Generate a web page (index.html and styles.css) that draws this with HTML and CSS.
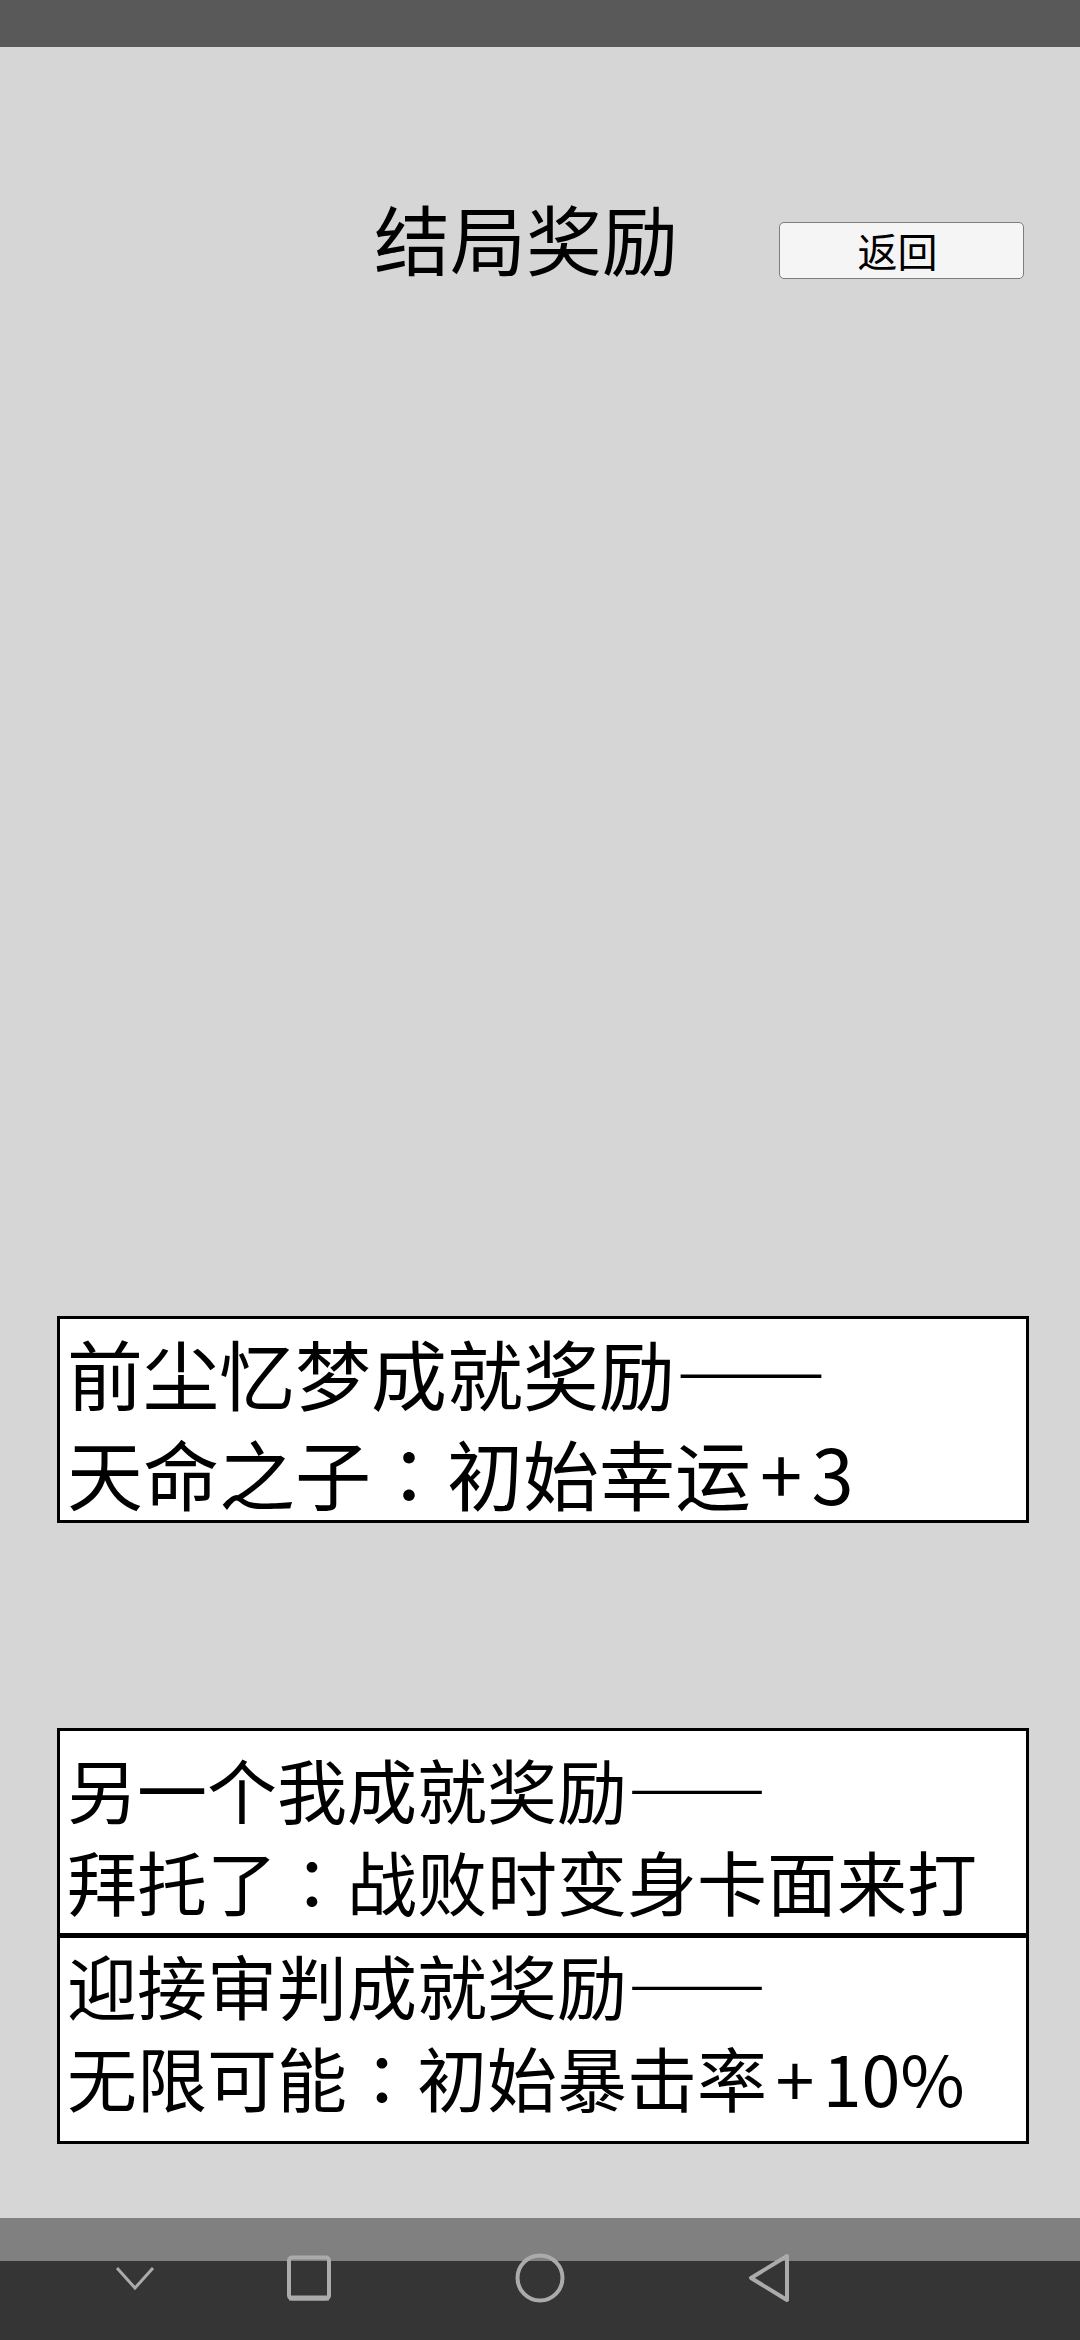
FILE: index.html
```html
<!DOCTYPE html>
<html lang="zh-CN">
<head>
<meta charset="utf-8">
<title>结局奖励</title>
<link rel="stylesheet" href="styles.css">
</head>
<body>
<div class="page">
  <div class="status-bar"></div>
  <header class="header">
    <h1 class="title">结局奖励</h1>
    <button class="back-btn">返回</button>
  </header>

  <section class="reward reward-first">
    <div class="line">前尘忆梦成就奖励<span class="dash">——</span></div>
    <div class="line">天命之子<span class="colon" lang="zh-TW">：</span>初始幸运<span class="plus">+</span>3</div>
  </section>

  <div class="reward-group">
    <section class="reward reward-second">
      <div class="line">另一个我成就奖励<span class="dash">——</span></div>
      <div class="line">拜托了<span class="colon" lang="zh-TW">：</span>战败时变身卡面来打</div>
    </section>
    <section class="reward reward-third">
      <div class="line">迎接审判成就奖励<span class="dash">——</span></div>
      <div class="line">无限可能<span class="colon" lang="zh-TW">：</span>初始暴击率<span class="plus">+</span>10%</div>
    </section>
  </div>

  <footer class="nav">
    <svg class="nav-icon icon-hide" viewBox="0 0 60 60" width="60" height="60">
      <polyline points="12,20 30,40 48,20" fill="none" stroke="#ababab" stroke-width="3" stroke-linejoin="miter"/>
    </svg>
    <svg class="nav-icon icon-recent" viewBox="0 0 60 60" width="60" height="60">
      <rect x="10" y="9.5" width="40" height="41" rx="3" fill="none" stroke="#ababab" stroke-width="4"/>
      <line x1="10" y1="50" x2="50" y2="50" stroke="#ababab" stroke-width="5"/>
    </svg>
    <svg class="nav-icon icon-home" viewBox="0 0 60 60" width="60" height="60">
      <circle cx="30" cy="30" r="22.5" fill="none" stroke="#ababab" stroke-width="4"/>
    </svg>
    <svg class="nav-icon icon-back" viewBox="0 0 60 60" width="60" height="60">
      <path d="M48 8 L12 30 L48 52 Z" fill="none" stroke="#ababab" stroke-width="4" stroke-linejoin="round"/>
    </svg>
  </footer>
</div>
</body>
</html>
```

FILE: styles.css
```css
* {
  box-sizing: border-box;
}

html, body {
  margin: 0;
  padding: 0;
}

body {
  background: #d6d6d6;
  font-family: "Noto Sans CJK SC", "Noto Sans", sans-serif;
  color: #000;
}

.page {
  width: 1080px;
  height: 2340px;
  display: flex;
  flex-direction: column;
  overflow: hidden;
}

.status-bar {
  height: 47px;
  flex: none;
  background: #595959;
}

.header {
  display: flex;
  align-items: flex-start;
  padding-top: 152px;
  flex: none;
}

.title {
  margin: 0 0 0 374px;
  font-size: 76px;
  font-weight: 400;
  line-height: 76px;
  height: 76px;
  white-space: nowrap;
}

.back-btn {
  margin: 23px 0 0 101px;
  width: 245px;
  height: 57px;
  padding: 0 8px 2px 0;
  background: #f5f5f5;
  border: 1px solid #7d7d7d;
  border-radius: 5px;
  font-family: "Noto Sans CJK SC", sans-serif;
  font-size: 40px;
  line-height: 1;
  color: #000;
  display: flex;
  align-items: center;
  justify-content: center;
}

.reward {
  margin-left: 57px;
  width: 972px;
  background: #fff;
  border: 3px solid #000;
  white-space: nowrap;
  overflow: visible;
}

.dash {
  font-weight: 700;
  letter-spacing: 0.07em;
}

.colon {
  font-family: "Noto Sans CJK TC", "Noto Sans CJK JP", sans-serif;
}

.plus {
  margin: 0 0.12em;
}

.reward-first {
  margin-top: 1037px;
  height: 207px;
  padding: 3px 0 0 7px;
  font-size: 76px;
  line-height: 100px;
}

.reward-group {
  margin-top: 205px;
  display: flex;
  flex-direction: column;
}

.reward-second {
  height: 208px;
  padding: 12px 0 0 7px;
  font-size: 70px;
  line-height: 92px;
}

.reward-third {
  margin-top: -1px;
  height: 209px;
  padding: 1px 0 0 7px;
  font-size: 70px;
  line-height: 92px;
}

.nav {
  margin-top: auto;
  height: 122px;
  flex: none;
  background: linear-gradient(to bottom, #808080 0, #808080 43px, #353535 43px, #353535 100%);
  display: flex;
  align-items: flex-start;
  padding: 30px 0 0 105px;
}

.nav-icon {
  display: block;
  flex: none;
}

.icon-recent {
  margin-left: 114px;
}

.icon-home {
  margin-left: 171px;
}

.icon-back {
  margin-left: 169px;
}
```
